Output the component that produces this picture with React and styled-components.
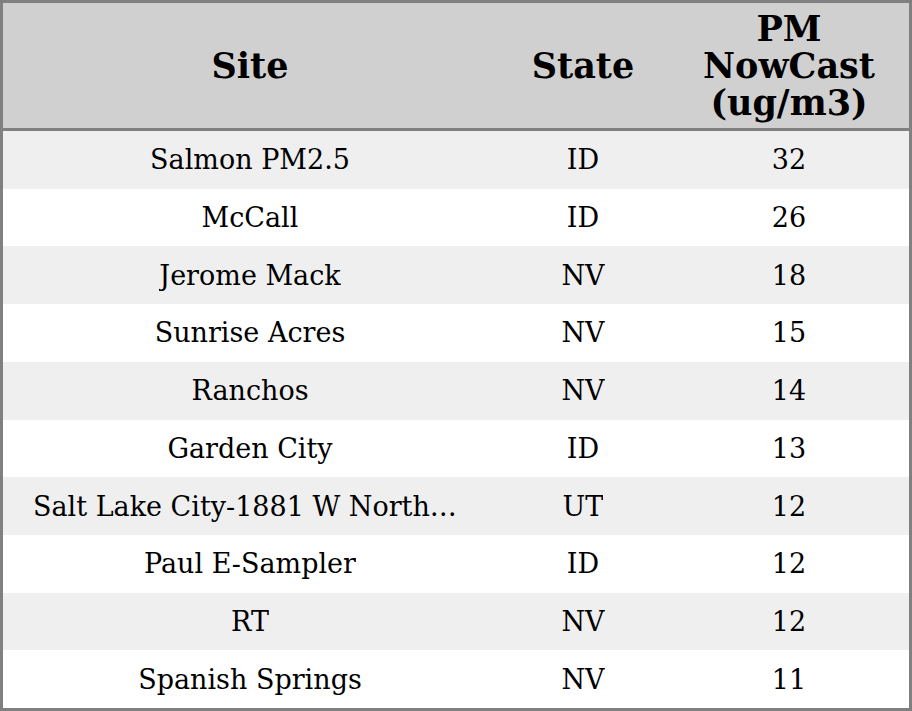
import React from "react";
import styled, { createGlobalStyle } from "styled-components";

const rows = [
  { site: "Salmon PM2.5", state: "ID", value: 32 },
  { site: "McCall", state: "ID", value: 26 },
  { site: "Jerome Mack", state: "NV", value: 18 },
  { site: "Sunrise Acres", state: "NV", value: 15 },
  { site: "Ranchos", state: "NV", value: 14 },
  { site: "Garden City", state: "ID", value: 13 },
  { site: "Salt Lake City-1881 W Northtemple", state: "UT", value: 12 },
  { site: "Paul E-Sampler", state: "ID", value: 12 },
  { site: "RT", state: "NV", value: 12 },
  { site: "Spanish Springs", state: "NV", value: 11 },
];

const GlobalStyle = createGlobalStyle`
  html, body {
    margin: 0;
    padding: 0;
    background: #ffffff;
  }
  body {
    font-family: "DejaVu Serif", "Liberation Serif", serif;
    color: #000;
  }
`;

const Table = styled.div`
  box-sizing: border-box;
  width: 912px;
  height: 711px;
  border: 3px solid #808080;
  display: grid;
  grid-template-columns: 494px 172px 240px;
  grid-template-rows: 128px repeat(10, 1fr);
`;

const HeaderCell = styled.div`
  background: #d0d0d0;
  border-bottom: 3px solid #808080;
  display: flex;
  align-items: center;
  justify-content: center;
  text-align: center;
  font-size: 35px;
  font-weight: bold;
  line-height: 37px;
  padding: 0 16px;
`;

const Cell = styled.div`
  background: ${(p) => (p.$striped ? "#efefef" : "#ffffff")};
  display: flex;
  align-items: center;
  justify-content: center;
  min-width: 0;
  padding: 0 30px;
  font-size: 27px;
`;

const Text = styled.span`
  display: block;
  max-width: 100%;
  white-space: nowrap;
  overflow: hidden;
  text-overflow: ellipsis;
`;

export default function App() {
  return (
    <>
      <GlobalStyle />
      <Table>
        <HeaderCell>Site</HeaderCell>
        <HeaderCell>State</HeaderCell>
        <HeaderCell>PM NowCast (ug/m3)</HeaderCell>
        {rows.map((row, i) => (
          <React.Fragment key={i}>
            <Cell $striped={i % 2 === 0}>
              <Text>{row.site}</Text>
            </Cell>
            <Cell $striped={i % 2 === 0}>
              <Text>{row.state}</Text>
            </Cell>
            <Cell $striped={i % 2 === 0}>
              <Text>{row.value}</Text>
            </Cell>
          </React.Fragment>
        ))}
      </Table>
    </>
  );
}
